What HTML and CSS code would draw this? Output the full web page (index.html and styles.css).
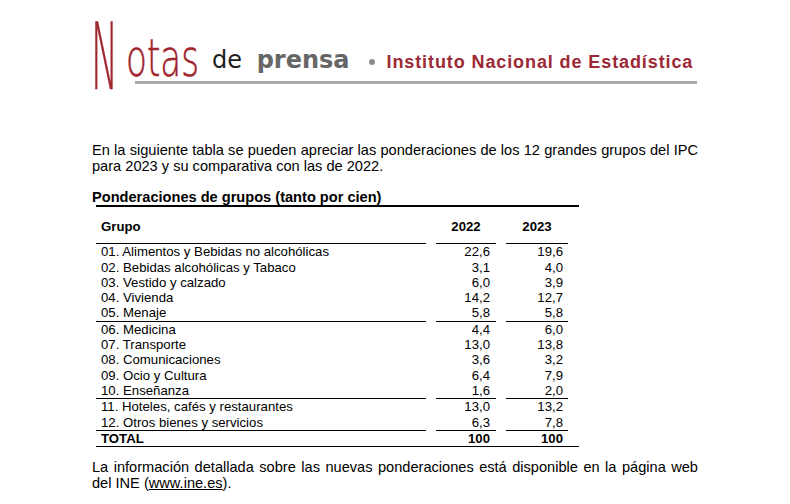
FILE: index.html
```html
<!DOCTYPE html>
<html lang="es">
<head>
<meta charset="utf-8">
<title>Notas de prensa - INE</title>
<link rel="stylesheet" href="styles.css">
</head>
<body>
<header class="header">
  <svg class="logo" width="125" height="95" viewBox="0 0 125 95" aria-label="Notas">
    <text class="logo-n" x="6" y="80" font-size="92" textLength="27" lengthAdjust="spacingAndGlyphs">N</text>
    <text class="logo-otas" x="41" y="67" font-size="52" textLength="73" lengthAdjust="spacingAndGlyphs">otas</text>
  </svg>
  <div class="masthead"><span class="de">de</span> <span class="prensa">prensa</span><span class="dot"></span><span class="ine">Instituto Nacional de Estadística</span></div>
</header>

<main class="content">
  <p class="para intro">En la siguiente tabla se pueden apreciar las ponderaciones de los 12 grandes grupos del IPC para 2023 y su comparativa con las de 2022.</p>

  <h2 class="table-title">Ponderaciones de grupos (tanto por cien)</h2>

  <table class="weights">
    <colgroup>
      <col class="c-group"><col class="c-sp"><col class="c-y1"><col class="c-sp"><col class="c-y2"><col class="c-end">
    </colgroup>
    <thead>
      <tr class="ruled">
        <th class="grp">Grupo</th><th class="sp"></th><th class="yr">2022</th><th class="sp"></th><th class="yr">2023</th><th class="sp"></th>
      </tr>
    </thead>
    <tbody>
      <tr><td class="grp">01. Alimentos y Bebidas no alcohólicas</td><td class="sp"></td><td class="n1">22,6</td><td class="sp"></td><td class="n2">19,6</td><td class="sp"></td></tr>
      <tr><td class="grp">02. Bebidas alcohólicas y Tabaco</td><td class="sp"></td><td class="n1">3,1</td><td class="sp"></td><td class="n2">4,0</td><td class="sp"></td></tr>
      <tr><td class="grp">03. Vestido y calzado</td><td class="sp"></td><td class="n1">6,0</td><td class="sp"></td><td class="n2">3,9</td><td class="sp"></td></tr>
      <tr><td class="grp">04. Vivienda</td><td class="sp"></td><td class="n1">14,2</td><td class="sp"></td><td class="n2">12,7</td><td class="sp"></td></tr>
      <tr class="ruled"><td class="grp">05. Menaje</td><td class="sp"></td><td class="n1">5,8</td><td class="sp"></td><td class="n2">5,8</td><td class="sp"></td></tr>
      <tr><td class="grp">06. Medicina</td><td class="sp"></td><td class="n1">4,4</td><td class="sp"></td><td class="n2">6,0</td><td class="sp"></td></tr>
      <tr><td class="grp">07. Transporte</td><td class="sp"></td><td class="n1">13,0</td><td class="sp"></td><td class="n2">13,8</td><td class="sp"></td></tr>
      <tr><td class="grp">08. Comunicaciones</td><td class="sp"></td><td class="n1">3,6</td><td class="sp"></td><td class="n2">3,2</td><td class="sp"></td></tr>
      <tr><td class="grp">09. Ocio y Cultura</td><td class="sp"></td><td class="n1">6,4</td><td class="sp"></td><td class="n2">7,9</td><td class="sp"></td></tr>
      <tr class="ruled"><td class="grp">10. Enseñanza</td><td class="sp"></td><td class="n1">1,6</td><td class="sp"></td><td class="n2">2,0</td><td class="sp"></td></tr>
      <tr><td class="grp">11. Hoteles, cafés y restaurantes</td><td class="sp"></td><td class="n1">13,0</td><td class="sp"></td><td class="n2">13,2</td><td class="sp"></td></tr>
      <tr class="ruled"><td class="grp">12. Otros bienes y servicios</td><td class="sp"></td><td class="n1">6,3</td><td class="sp"></td><td class="n2">7,8</td><td class="sp"></td></tr>
      <tr class="total"><td class="grp">TOTAL</td><td class="sp"></td><td class="n1">100</td><td class="sp"></td><td class="n2">100</td><td class="sp"></td></tr>
    </tbody>
  </table>

  <p class="para outro">La información detallada sobre las nuevas ponderaciones está disponible en la página web del INE (<a class="link" href="#">www.ine.es</a>).</p>
</main>
</body>
</html>
```

FILE: styles.css
```css
html, body {
  margin: 0;
  padding: 0;
  background: #ffffff;
}

body {
  font-family: "Liberation Sans", Arial, sans-serif;
  color: #000000;
  width: 790px;
  height: 504px;
  overflow: hidden;
}

/* ---------- header ---------- */
.header {
  position: relative;
  height: 84px;
}

.logo {
  position: absolute;
  left: 85px;
  top: 9px;
  overflow: visible;
}

.logo-n,
.logo-otas {
  font-family: "DejaVu Sans", sans-serif;
  font-weight: 200;
  fill: #a0242d;
  stroke: #a0242d;
  stroke-width: 0.6;
}

.masthead {
  margin-left: 135px;
  width: 562px;
  box-sizing: border-box;
  padding: 48px 0 8px 77px;
  line-height: 25px;
  height: 84px;
  border-bottom: 3px solid #a9a9a9;
  white-space: nowrap;
  font-family: "DejaVu Sans", "Liberation Sans", sans-serif;
  font-size: 24px;
}

.de {
  color: #1e1e1e;
}

.prensa {
  color: #666666;
  font-weight: bold;
  margin-left: 7px;
}

.dot {
  display: inline-block;
  width: 6px;
  height: 6px;
  border-radius: 50%;
  background: #8c8c8c;
  margin: 0 12px 0 19px;
  vertical-align: 3px;
}

.ine {
  font-family: "Liberation Sans", Arial, sans-serif;
  font-size: 18px;
  font-weight: bold;
  color: #9b2935;
  letter-spacing: 0.9px;
}

/* ---------- content ---------- */
.content {
  margin-left: 92px;
  width: 606px;
}

.para {
  font-size: 14.6px;
  line-height: 16px;
  text-align: justify;
  margin: 0;
}

.intro {
  margin-top: 58px;
}

.table-title {
  font-size: 14.6px;
  line-height: 16px;
  font-weight: bold;
  margin: 15px 0 0 0;
}

.weights {
  margin-left: 4px;
  width: 483px;
  table-layout: fixed;
  border-collapse: collapse;
  border-top: 2px solid #000;
  border-bottom: 1px solid #000;
  font-size: 13.2px;
  line-height: 15.3px;
}

.c-group { width: 330px; }
.c-sp { width: 10px; }
.c-y1 { width: 60px; }
.c-y2 { width: 62px; }
.c-end { width: 11px; }

.weights th,
.weights td {
  padding: 0;
  white-space: nowrap;
}

.weights th {
  font-weight: bold;
  padding-top: 12px;
  padding-bottom: 9px;
}

.weights th.grp {
  text-align: left;
}

.weights th.yr {
  text-align: center;
}

.weights .grp {
  padding-left: 5px;
  text-align: left;
}

.weights td.n1 {
  text-align: right;
  padding-right: 6px;
}

.weights td.n2 {
  text-align: right;
  padding-right: 5px;
}

.weights tr.ruled th:not(.sp),
.weights tr.ruled td:not(.sp) {
  border-bottom: 1px solid #000;
}

.weights tr.total td {
  font-weight: bold;
}

.outro {
  margin-top: 12px;
}

.link {
  color: #000;
  text-decoration: underline;
}
```
